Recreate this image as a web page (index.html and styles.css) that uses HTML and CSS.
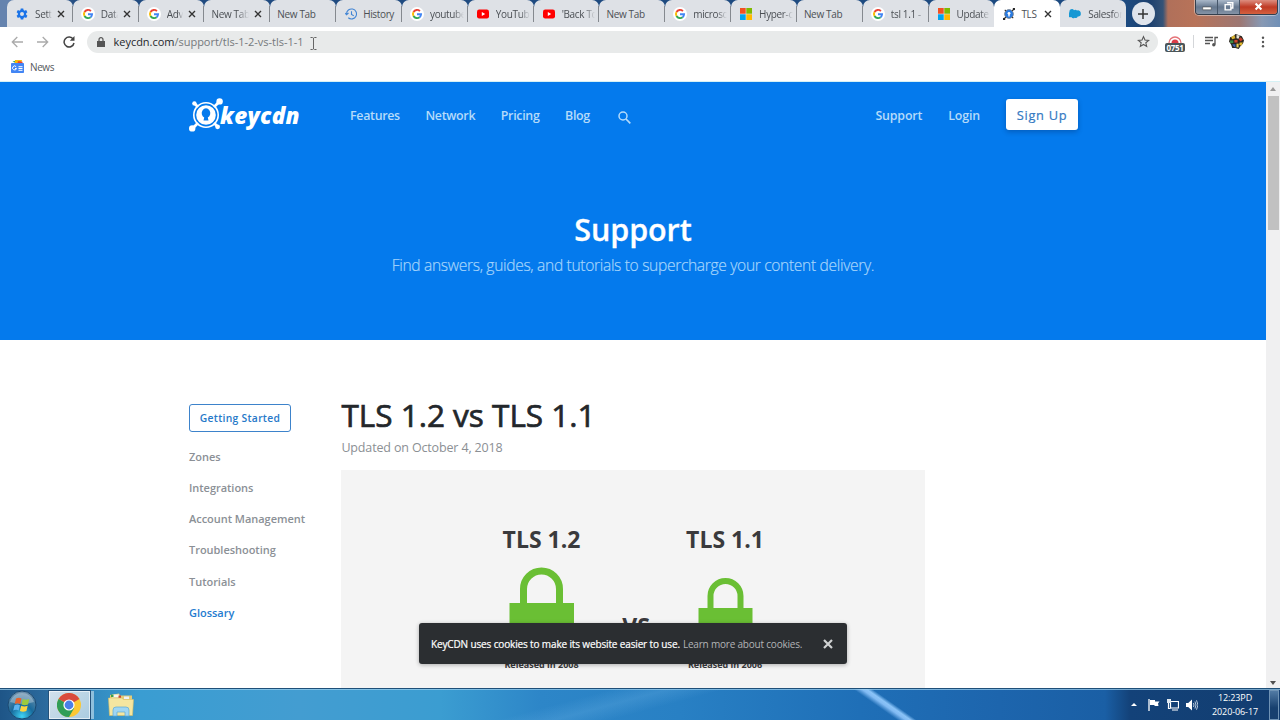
FILE: index.html
```html
<!DOCTYPE html>
<html lang="en">
<head>
  <meta charset="UTF-8">
  <title>TLS 1.2 vs TLS 1.1 - KeyCDN Support</title>
  <link rel="stylesheet" href="styles.css">
</head>
<body>

  <svg class="defs">
    <symbol id="google" viewBox="0 0 48 48">
      <circle cx="24" cy="24" r="24" fill="#fff"/>
      <g fill="none" stroke-width="6.5">
        <path d="M34 14A14 14 0 0 0 12 17" stroke="#ea4335"/>
        <path d="M12 17A14 14 0 0 0 12 31" stroke="#fbbc05"/>
        <path d="M12 31A14 14 0 0 0 33 35" stroke="#34a853"/>
        <path d="M33 35A14 14 0 0 0 38 25H24" stroke="#4285f4"/>
      </g>
    </symbol>
    <symbol id="windows" viewBox="0 0 12 12">
      <path d="M0 0h5.7v5.7H0z" fill="#f25022"/>
      <path d="M6.3 0H12v5.7H6.3z" fill="#7fba00"/>
      <path d="M0 6.3h5.7V12H0z" fill="#00a4ef"/>
      <path d="M6.3 6.3H12V12H6.3z" fill="#ffb900"/>
    </symbol>
    <symbol id="youtube" viewBox="0 0 12 12">
      <rect y="1.5" width="12" height="9" rx="2.2" fill="#f00"/>
      <path d="M4.8 4l3.4 2-3.4 2z" fill="#fff"/>
    </symbol>
    <symbol id="close" viewBox="0 0 8 8">
      <path d="M1 1l6 6M7 1L1 7" stroke="currentColor" stroke-width="1.4" fill="none"/>
    </symbol>
    <symbol id="keycdn" viewBox="0 0 34 34">
      <g fill="none" stroke="currentColor">
        <circle cx="17" cy="17" r="12.2" stroke-width="1.6"/>
        <path d="M3 31l6-6M25 9l6-6M5 5l4 4M25 25l4 4" stroke-width="2.8"/>
      </g>
      <g fill="currentColor">
        <circle cx="17" cy="17" r="9.8"/>
        <circle cx="3.2" cy="30.4" r="3.2"/>
        <circle cx="30.6" cy="3.4" r="3.2"/>
        <circle cx="5.4" cy="5.4" r="2.2"/>
        <circle cx="28.6" cy="28.8" r="2.4"/>
      </g>
      <path d="M15.200 19.500a4.300 4.800 0 1 1 3.600 0l.7 3h-5z" fill="#047aed"/>
    </symbol>
  </svg>

  <div class="tab-strip">
    <div class="tabs">
      <div class="tab">
        <svg class="favicon" viewBox="0 0 24 24"><path fill="#1a73e8" fill-rule="evenodd" d="M9.5 1h5l.6 3.2 2 1.2 3.2-1.2 2.5 4.3-2.5 2.2v2.6l2.5 2.2-2.5 4.3-3.2-1.2-2 1.2-.6 3.2h-5l-.6-3.2-2-1.2-3.2 1.2-2.5-4.3 2.5-2.2v-2.6L1.2 8.5l2.5-4.3 3.2 1.2 2-1.2zM12 8a4 4 0 1 0 0 8 4 4 0 0 0 0-8z"/></svg>
        <span>Settings</span><svg class="tab-close"><use href="#close"/></svg>
      </div>
      <div class="tab"><svg class="favicon big"><use href="#google"/></svg><span>Data</span><svg class="tab-close"><use href="#close"/></svg></div>
      <div class="tab"><svg class="favicon big"><use href="#google"/></svg><span>Advanced</span><svg class="tab-close"><use href="#close"/></svg></div>
      <div class="tab"><span>New Tab</span><svg class="tab-close"><use href="#close"/></svg></div>
      <div class="tab"><span>New Tab</span></div>
      <div class="tab">
        <svg class="favicon" viewBox="0 0 24 24"><path fill="none" stroke="#4285d4" stroke-width="2.2" d="M3 12a10 10 0 1 1 3.5 7.5M0 10l3 3.500L7 10M13 6.500V13l4.500 2.500"/></svg>
        <span class="fits">History</span>
      </div>
      <div class="tab"><svg class="favicon big"><use href="#google"/></svg><span>youtube</span></div>
      <div class="tab"><svg class="favicon"><use href="#youtube"/></svg><span>YouTube</span></div>
      <div class="tab"><svg class="favicon"><use href="#youtube"/></svg><span>'Back To</span></div>
      <div class="tab"><span>New Tab</span></div>
      <div class="tab"><svg class="favicon big"><use href="#google"/></svg><span>microsoft</span></div>
      <div class="tab"><svg class="favicon"><use href="#windows"/></svg><span>Hyper-c</span></div>
      <div class="tab"><span>New Tab</span></div>
      <div class="tab"><svg class="favicon big"><use href="#google"/></svg><span>tsl 1.1 -</span></div>
      <div class="tab before-active"><svg class="favicon"><use href="#windows"/></svg><span>Update</span></div>
      <div class="tab active">
        <svg class="favicon" viewBox="0 0 34 34">
          <path d="M3 31L31 3M5 5l24 24" stroke="#222" stroke-width="3"/>
          <circle cx="3" cy="31" r="3.5" fill="#222"/><circle cx="31" cy="3" r="3.5" fill="#222"/>
          <circle cx="17" cy="17" r="12.5" fill="#2a7be0" stroke="#777" stroke-width="2"/>
          <circle cx="17" cy="15" r="4" fill="#fff"/><path d="M15 15h4v9h-4z" fill="#fff"/>
        </svg>
        <span class="fits">TLS</span><svg class="tab-close"><use href="#close"/></svg>
      </div>
      <div class="tab"><svg class="favicon" viewBox="0 0 24 24"><path fill="#1798d4" d="M10 4.500a5 5 0 0 1 6 .5 5.500 5.500 0 0 1 7.500 6 5 5 0 0 1-6 6 4.500 4.500 0 0 1-6 2.500 5 5 0 0 1-7-1.500A5 5 0 0 1 1 8.500a5 5 0 0 1 9-4z"/></svg><span>Salesforce</span></div>
    </div>
    <div class="new-tab"><svg viewBox="0 0 12 12"><path d="M6 1v10M1 6h10" stroke="#333" stroke-width="1.5"/></svg></div>
    <div class="window-buttons">
      <div class="win-btn"><svg viewBox="0 0 22 13"><path d="M7 7h9v3H7z" fill="#fff" stroke="#444" stroke-width=".6"/></svg></div>
      <div class="win-btn"><svg viewBox="0 0 22 13"><path d="M9.500 2.500h6v5.500h-2M7.500 4.500h6v5.500h-6z" fill="none" stroke="#fff" stroke-width="1.5"/></svg></div>
      <div class="win-btn win-close"><svg viewBox="0 0 38 13"><path d="M16 3.500l6 6M22 3.500l-6 6" stroke="#fff" stroke-width="2.2"/></svg></div>
    </div>
  </div>

  <div class="toolbar">
    <div class="nav-buttons">
      <svg viewBox="0 0 12 12"><path d="M12 6H1.500M6.300 1L1.300 6l5 5" stroke="#aaa"/></svg>
      <svg viewBox="0 0 12 12"><path d="M0 6h10.500M5.700 1l5 5-5 5" stroke="#aaa"/></svg>
      <svg viewBox="0 0 12 12"><path d="M10.300 3.300A5 5 0 1 0 11 7" stroke="#444" stroke-width="1.5"/><path d="M11.500 0v4.800H6.800z" fill="#444" stroke="none"/></svg>
    </div>
    <div class="omnibox">
      <svg class="lock" viewBox="0 0 8 10"><path d="M0 4h8v6H0z" fill="#555"/><path d="M2 4V2.700a2 2 0 0 1 4 0V4" fill="none" stroke="#555" stroke-width="1.2"/></svg>
      <div class="url">keycdn.com<span>/support/tls-1-2-vs-tls-1-1</span></div>
      <svg class="caret" viewBox="0 0 7 13"><path d="M.5.5h2l1 .7 1-.7h2M3.500 1v11M.500 12.500h2l1-.7 1 .7h2" fill="none" stroke="#666"/></svg>
      <svg class="star" viewBox="0 0 24 24"><path d="M12 3l2.700 6.300 6.800.6-5.200 4.500 1.600 6.700-5.900-3.600-5.900 3.600 1.600-6.700-5.200-4.500 6.800-.6z" fill="none" stroke="#555" stroke-width="2"/></svg>
    </div>
    <div class="extensions">
      <div class="recorder">
        <svg viewBox="0 0 14 8"><path d="M1 8a6 6 0 0 1 12 0" fill="none" stroke="#e57378" stroke-width="1.3"/><path d="M3.500 8a3.500 3.500 0 0 1 7 0z" fill="#dc3c46"/></svg>
        <span>0751</span>
      </div>
      <i class="divider"></i>
      <svg class="playlist" viewBox="0 0 13 11"><path d="M0 1.500h8M0 4.500h8M0 7.500h5" stroke="#555" stroke-width="1.3"/><path d="M10 8.500V1.500h3" fill="none" stroke="#555" stroke-width="1.3"/><circle cx="8.8" cy="8.8" r="1.7" fill="#555"/></svg>
      <svg class="avatar" viewBox="0 0 14 14">
        <path d="M1 3l3-1 2-2 3 1 3 1 2 4-1 3-2 2-2 3-3-1-3 0-1-3-2-3z" fill="#2a2720"/>
        <path d="M2 3l3-2 1 3-3 1z" fill="#d9b22b"/><path d="M7 1l3 .5-1 3-2-.5z" fill="#e8e3d5"/><path d="M10.500 3l2.500 2-2 2-2-2z" fill="#c83d2a"/>
        <path d="M1 6l3 0 0 2.500-3 0z" fill="#3c8b45"/><path d="M5 5.500l3 0 0 2.500-3 0z" fill="#d4442b"/><path d="M10 8l3 0-1.500 3-2-1z" fill="#e2b92e"/>
        <path d="M3 9.500l3 0 0 3-2-1z" fill="#3a64b5"/><path d="M7 9l2 0 0 3.500-2 0z" fill="#e5d054"/>
      </svg>
      <svg class="menu" viewBox="0 0 4 12"><circle cx="2" cy="1.8" r="1.2"/><circle cx="2" cy="6" r="1.2"/><circle cx="2" cy="10.2" r="1.2"/></svg>
    </div>
  </div>

  <div class="bookmarks">
    <svg viewBox="0 0 13 13"><path d="M1.500 1.500l5-1.200.5 4z" fill="#34a853"/><path d="M4 0h7l-1 4H4z" fill="#fbbc05"/><path d="M7 1l4.500.7V5H6z" fill="#ea4335"/><rect y="3" width="13" height="10" rx=".8" fill="#4285f4"/><path d="M5.200 6.800A2 2 0 1 0 5.500 8.500H4M7.500 6.700h4M7.500 8.500h4M7.500 10.300h4" fill="none" stroke="#fff"/></svg>
    <span>News</span>
  </div>

  <div class="viewport">
    <div class="page">
      <header class="hero">
        <nav>
          <a class="logo"><svg><use href="#keycdn"/></svg><b>keycdn</b></a>
          <div class="nav-links">
            <a>Features</a>
            <a>Network</a>
            <a>Pricing</a>
            <a>Blog</a>
            <svg viewBox="0 0 13 13"><circle cx="5" cy="5" r="4" fill="none" stroke="currentColor" stroke-width="1.5"/><path d="M8 8l4.300 4.300" stroke="currentColor" stroke-width="1.7"/></svg>
          </div>
          <div class="nav-account">
            <a>Support</a>
            <a>Login</a>
            <a class="sign-up">Sign Up</a>
          </div>
        </nav>
        <h2>Support</h2>
        <p>Find answers, guides, and tutorials to supercharge your content delivery.</p>
      </header>

      <main>
        <aside>
          <a class="started">Getting Started</a>
          <a>Zones</a>
          <a>Integrations</a>
          <a>Account Management</a>
          <a>Troubleshooting</a>
          <a>Tutorials</a>
          <a class="current">Glossary</a>
        </aside>
        <article>
          <h1>TLS 1.2 vs TLS 1.1</h1>
          <p class="updated">Updated on October 4, 2018</p>
          <svg class="figure" viewBox="0 0 584 218">
            <g class="figure-title">
              <text x="200.5" y="78">TLS 1.2</text>
              <text x="384" y="78">TLS 1.1</text>
              <text x="295" y="165">VS</text>
            </g>
            <g fill="#6abf34">
              <path d="M168.500 133h64.500v48h-64.500z"/>
              <path d="M357.500 138h54v40h-54z"/>
            </g>
            <g fill="none" stroke="#6abf34">
              <path d="M182.500 134v-15a18 18 0 0 1 36 0V134" stroke-width="7"/>
              <path d="M369.500 139v-13a15 15 0 0 1 30 0v13" stroke-width="6"/>
            </g>
            <g class="figure-note">
              <text x="200.5" y="198">Released in 2008</text>
              <text x="384" y="198">Released in 2006</text>
            </g>
          </svg>
        </article>
      </main>

      <div class="cookies">
        <span>KeyCDN uses cookies to make its website easier to use.</span>
        <a>Learn more about cookies.</a>
        <svg viewBox="0 0 10 10"><path d="M1 1l8 8M9 1L1 9" stroke="#d0d2d3" stroke-width="2.2"/></svg>
      </div>
    </div>
    <div class="scrollbar">
      <i class="up"></i>
      <div class="thumb"></div>
      <i class="down"></i>
    </div>
  </div>

  <div class="taskbar">
    <svg class="start" viewBox="0 0 30 30">
      <defs>
        <radialGradient id="orb" cx=".5" cy=".9" r=".9"><stop offset="0" stop-color="#3fd3f5"/><stop offset=".45" stop-color="#176a9c"/><stop offset="1" stop-color="#7593ad"/></radialGradient>
      </defs>
      <circle cx="15" cy="15" r="14" fill="url(#orb)" stroke="#1b4a72"/>
      <path d="M3 12a12.500 12.500 0 0 1 24 0q-12 4-24 0z" fill="#fff" opacity=".3"/>
      <path d="M9 8.500q3-1.500 5.500 0l-1.300 5.500q-2.500-1.500-5.500 0z" fill="#e8622c"/>
      <path d="M15.800 9q3 1.500 6.500 0L21 14.500q-3.500 1.500-6.500 0z" fill="#9ccb3d"/>
      <path d="M7.500 15.300q3-1.500 5.500 0l-1.300 5.200q-2.500-1.500-5.500 0z" fill="#5fb4ef"/>
      <path d="M14.200 15.800q3 1.500 6.500 0l-1.300 5.200q-3.500 1.500-6.500 0z" fill="#fdd33e"/>
    </svg>
    <div class="task-chrome">
      <svg viewBox="0 0 24 24">
        <circle cx="12" cy="12" r="12" fill="#fbc834"/>
        <path d="M12 12L1.600 6A12 12 0 0 1 22.400 6z" fill="#d94b3d"/>
        <path d="M1.600 6A12 12 0 0 0 12 24l5.200-9L12 12z" fill="#2f9e57"/>
        <circle cx="12" cy="12" r="5.6" fill="#fff"/>
        <circle cx="12" cy="12" r="4.4" fill="#4a80e8"/>
      </svg>
    </div>
    <svg class="explorer" viewBox="0 0 26 24">
      <path d="M2 2l9-1.500 1 2h12V22H2z" fill="#e3cc78"/>
      <path d="M4 1.500h7v3H4z" fill="#f7f7f0"/><path d="M3 1.500h2.500V4H3z" fill="#3fa04a"/><path d="M10.500 2.500H13V5h-2.500z" fill="#cc4836"/><path d="M16 3.500h5V6h-5z" fill="#eef3f5"/>
      <path d="M.5 5h13l2 1.500H25.500L24.500 22.500h-23z" fill="#f5e6a0" stroke="#d9bf65" stroke-width=".6"/>
      <path d="M5 23v-6q0-3 3-3h10q3 0 3 3v6h-4v-4H9v4z" fill="#9fd6f3" stroke="#5ca9d6" stroke-width=".7"/>
    </svg>
    <div class="tray">
      <svg class="tray-up" viewBox="0 0 6 3"><path d="M0 3l3-3 3 3z" fill="#fff"/></svg>
      <svg class="tray-flag" viewBox="0 0 12 12"><path d="M1 0v12" stroke="#fff" stroke-width="1.3"/><path d="M2 1h5v1.500h4.500L10 4.500 10.500 7H6.500V6H2z" fill="#fff"/></svg>
      <svg class="tray-net" viewBox="0 0 12 12"><path d="M3.500 2.500h8v6.500h-8zM5 11h6M1.500 4v5.500h2" fill="none" stroke="#fff" stroke-width="1.2"/><path d="M0 0h4v4H0z" fill="#dfe8f0"/></svg>
      <svg class="tray-sound" viewBox="0 0 12 12"><path d="M0 4h2.200L6 .5v11L2.200 8H0z" fill="#fff"/><path d="M7.500 4q1 2 0 4M9 2.500q2 3.500 0 7M10.500 1.300q3 4.700 0 9.400" fill="none" stroke="#e4eef7" stroke-width=".8"/></svg>
      <div class="clock"><div>12:23PD</div><div>2020-06-17</div></div>
      <div class="show-desktop"></div>
    </div>
  </div>

</body>
</html>
```

FILE: styles.css
```css
* {
  box-sizing: border-box;
}

body {
  margin: 0;
  width: 1280px;
  height: 720px;
  overflow: hidden;
  font-family: "Open Sans", "Noto Sans", sans-serif;
  background-color: white;
}

svg {
  display: block;
  flex: none;
}

.defs {
  display: none;
}

/* browser tabs */
.tab-strip {
  display: flex;
  height: 27px;
  padding-left: 7px;
  background: linear-gradient(90deg, #6583ae 0, #6583ae 7px, #214b80 80px, #1c4a80 1126px, #1d416f 1150px, #355377 1163px, #b0705a 1168px, #b87359 1195px, #9c7773 1240px, #8799b4 1262px, #6f8fb6 1280px);
}

.tabs {
  display: flex;
  width: 1119px;
}

.tab {
  position: relative;
  display: flex;
  align-items: center;
  flex: 1 1 0;
  min-width: 0;
  padding: 0 4px 0 9px;
  gap: 7px;
  background-color: #dee1e6;
  border-radius: 7px 7px 0 0;
  color: #4c5055;
  font-size: 10px;
}

.tab::after {
  content: "";
  position: absolute;
  right: 0;
  top: 6px;
  width: 1px;
  height: 16px;
  background-color: #85898f;
}

.tab.active::after,
.tab.before-active::after,
.tab:last-child::after {
  display: none;
}

.tab.active {
  background-color: white;
}

.tab span {
  flex: 1;
  min-width: 0;
  overflow: hidden;
  white-space: nowrap;
  letter-spacing: -0.35px;
  -webkit-mask-image: linear-gradient(90deg, #000 70%, transparent);
  mask-image: linear-gradient(90deg, #000 70%, transparent);
}

.tab > span:first-child:last-child,
.tab .fits {
  -webkit-mask-image: none;
  mask-image: none;
}

.tab > span:first-child {
  margin-left: -2px;
}

.tab .fits {
  margin-left: -1px;
}

.favicon {
  width: 12px;
  height: 12px;
}

.favicon.big {
  width: 14px;
  height: 14px;
  margin: 0 -1px;
}

.tab-close {
  width: 8px;
  height: 8px;
  margin: 0 4px 0 -2px;
  color: #333;
}

.new-tab {
  display: flex;
  align-items: center;
  justify-content: center;
  width: 23px;
  height: 23px;
  margin: 2px 0 0 5.5px;
  border-radius: 50%;
  background-color: #dfe4ec;
}

.new-tab svg {
  width: 12px;
  height: 12px;
}

.window-buttons {
  display: flex;
  height: 15px;
  margin-left: 40.5px;
  border: 1px solid #333f4e;
  border-top: 0;
  border-radius: 0 0 4px 4px;
  box-shadow: 0 0 0 1px rgba(255, 255, 255, 0.4);
  overflow: hidden;
}

.win-btn {
  width: 22px;
  background: linear-gradient(#aab8c9, #66788f 50%, #8493a6);
  border-right: 1px solid #46566a;
}

.win-btn svg {
  width: 100%;
  height: 13px;
}

.win-btn.win-close {
  width: 37px;
  background: linear-gradient(#dd8e80, #bf3a25 50%, #d4613f);
  border-right: 0;
}

/* address bar */
.toolbar {
  display: flex;
  align-items: center;
  height: 29px;
}

.nav-buttons {
  display: flex;
  gap: 14px;
  width: 87px;
  padding-left: 11px;
}

.nav-buttons svg {
  width: 12px;
  height: 12px;
  fill: none;
  stroke-width: 1.3;
}

.omnibox {
  display: flex;
  align-items: center;
  width: 1071px;
  height: 22px;
  padding: 0 8px 0 10px;
  border-radius: 11px;
  background-color: #e8eaea;
}

.lock {
  width: 8px;
  height: 10px;
}

.url {
  width: 190px;
  margin-left: 8.5px;
  font-size: 11px;
  letter-spacing: -0.02px;
  color: #25272a;
  white-space: nowrap;
}

.url span {
  color: #75797c;
}

.caret {
  width: 7px;
  height: 13px;
  margin: 3px 0 0 6.5px;
}

.star {
  width: 13px;
  height: 13px;
  margin-left: auto;
}

.extensions {
  display: flex;
  align-items: center;
  flex: 1;
  padding-left: 7px;
}

.recorder {
  display: flex;
  flex-direction: column;
  align-items: center;
  width: 20px;
  margin-top: 4px;
}

.recorder svg {
  width: 14px;
  height: 8px;
}

.recorder span {
  width: 20px;
  height: 9px;
  border-radius: 2px;
  background-color: #4b5558;
  color: white;
  font-size: 8px;
  font-weight: bold;
  line-height: 9px;
  text-align: center;
  letter-spacing: -0.3px;
}

.divider {
  width: 1px;
  height: 13px;
  margin: 0 11px 0 8px;
  background-color: #d4d6d9;
}

.playlist {
  width: 13px;
  height: 11px;
}

.avatar {
  width: 15px;
  height: 15px;
  margin-left: 11px;
}

.menu {
  width: 4px;
  height: 12px;
  margin-left: 17px;
  fill: #555;
}

.bookmarks {
  display: flex;
  align-items: center;
  gap: 6px;
  height: 26px;
  padding: 0 0 4px 11px;
  border-bottom: 1px solid #d5f1f5;
  font-size: 10px;
  color: #55585c;
}

.bookmarks svg {
  width: 13px;
  height: 13px;
}

.bookmarks span {
  letter-spacing: -0.4px;
}

/* page */
.viewport {
  display: flex;
  height: 606px;
}

.page {
  position: relative;
  width: 1266px;
  overflow: hidden;
}

.hero {
  height: 258px;
  background-color: #047aed;
  text-align: center;
}

nav {
  display: flex;
  align-items: center;
  width: 889px;
  height: 67px;
  margin-left: 189px;
  font-size: 12.4px;
  font-weight: 600;
  color: #b5dbfa;
}

.logo {
  display: flex;
  align-items: center;
  width: 161px;
  color: white;
}

.logo svg {
  width: 34px;
  height: 34px;
  margin-top: -1px;
}

.logo b {
  margin: 1px 0 0 -3px;
  font-size: 22.5px;
  font-weight: 800;
  font-style: italic;
  line-height: 28px;
  letter-spacing: 0.3px;
}

.nav-links {
  display: flex;
  align-items: center;
  gap: 25.6px;
  letter-spacing: -0.3px;
}

.nav-links svg {
  width: 13px;
  height: 13px;
  margin: 3px 0 0 2px;
}

.nav-account {
  display: flex;
  align-items: center;
  gap: 26px;
  margin-left: auto;
  letter-spacing: -0.15px;
}

.sign-up {
  width: 72px;
  height: 31px;
  margin-bottom: 2px;
  border-radius: 3px;
  background-color: white;
  box-shadow: 0 2px 5px rgba(0, 30, 80, 0.3);
  color: #3379c2;
  font-size: 12.8px;
  font-weight: 500;
  line-height: 32px;
  letter-spacing: 0.7px;
  -webkit-text-stroke: 0.2px #3379c2;
}

.hero h2 {
  margin: 58px 0 0;
  font-size: 30.5px;
  font-weight: 600;
  line-height: 44px;
  letter-spacing: -0.1px;
  color: white;
  -webkit-text-stroke: 0.3px white;
}

.hero p {
  margin: 2px 0 0;
  font-size: 15.6px;
  font-weight: 300;
  line-height: 24px;
  letter-spacing: -0.33px;
  color: #a6d5fc;
  -webkit-text-stroke: 0.2px #a6d5fc;
}

main {
  display: flex;
  width: 889px;
  margin-left: 189px;
  padding-top: 64px;
}

aside {
  display: flex;
  flex-direction: column;
  align-items: flex-start;
  width: 152.4px;
  font-size: 11px;
  font-weight: 600;
  letter-spacing: -0.03px;
  color: #8b9096;
}

aside a {
  height: 31.2px;
  line-height: 31px;
  white-space: nowrap;
}

aside .started {
  width: 102px;
  height: 28px;
  margin-bottom: 8.8px;
  border: 1px solid #3d83cb;
  border-radius: 3px;
  color: #2678c8;
  font-size: 10.3px;
  line-height: 26px;
  text-align: center;
  letter-spacing: 0.3px;
}

aside .current {
  color: #1f7cd0;
}

h1 {
  margin: -12px 0 0;
  font-size: 31.5px;
  font-weight: 400;
  line-height: 45px;
  color: #23272b;
  white-space: nowrap;
  -webkit-text-stroke: 0.7px #23272b;
}

.updated {
  margin: 1px 0 12px;
  font-size: 12.5px;
  line-height: 20px;
  letter-spacing: -0.15px;
  color: #8b8f94;
}

.figure {
  width: 584px;
  height: 218px;
  background-color: #f4f4f4;
}

.figure text {
  fill: #3a3a3c;
  font-weight: 700;
  text-anchor: middle;
}

.figure-title {
  font-size: 23px;
}

.figure-note {
  font-size: 9px;
}

.cookies {
  position: absolute;
  left: 419px;
  top: 541px;
  display: flex;
  align-items: center;
  width: 428px;
  height: 41px;
  padding: 0 14px 0 12px;
  border-radius: 3px;
  background-color: #2b2e31;
  box-shadow: 0 1px 4px rgba(0, 0, 0, 0.3);
  color: white;
  font-size: 10px;
  letter-spacing: -0.14px;
  white-space: nowrap;
}

.cookies span {
  -webkit-text-stroke: 0.2px white;
}

.cookies a {
  margin-left: 3px;
  letter-spacing: -0.2px;
  color: #b2b4b6;
}

.cookies svg {
  width: 10px;
  height: 10px;
  margin-left: auto;
}

.scrollbar {
  display: flex;
  flex-direction: column;
  align-items: center;
  width: 14px;
  padding: 5px 0 3px;
  background-color: #f0f0f1;
}

.thumb {
  width: 11px;
  height: 134px;
  margin: 5px 0 auto 1px;
  background-color: #c1c1c1;
}

.up,
.down {
  border: 3px solid transparent;
}

.up {
  border-top: 0;
  border-bottom: 4px solid #999;
}

.down {
  border-bottom: 0;
  border-top: 4px solid #505050;
}

/* taskbar */
.taskbar {
  display: flex;
  align-items: center;
  height: 32px;
  border-top: 1px solid #1f4f78;
  box-shadow: inset 0 1px 0 rgba(160, 210, 240, 0.7);
  background:
    linear-gradient(35deg, transparent 40%, rgba(140, 195, 250, 0.9) 47%, rgba(150, 205, 255, 0.9) 51%, transparent 56%) 850px 0 / 76px 32px no-repeat,
    linear-gradient(165deg, transparent 35%, rgba(130, 195, 240, 0.2) 50%, transparent 65%) 480px 0 / 260px 32px no-repeat,
    linear-gradient(90deg, #1e5587 0, #2b6a9d 45px, #338bc0 95px, #3a9dd2 140px, #439dd1 300px, #3b9dd1 440px, #2d86c8 540px, #2880c4 680px, #1f6fb7 860px, #1d65ad 1000px, #1a5fa5 1105px, #134279 1130px, #123d70 1280px);
}

.start {
  width: 30px;
  height: 30px;
  margin-left: 7px;
}

.task-chrome {
  display: flex;
  align-items: center;
  justify-content: center;
  width: 43px;
  height: 30px;
  margin-left: 11px;
  padding-right: 1px;
  border: 1px solid #24527a;
  box-shadow: inset 0 0 0 1px rgba(255, 255, 255, 0.6), 4px 0 0 -1px #8fc0dc;
  background: linear-gradient(135deg, #d3e2ec, #a9cbe0);
}

.task-chrome svg {
  width: 24px;
  height: 24px;
}

.explorer {
  width: 26px;
  height: 24px;
  margin-left: 17px;
}

.tray {
  display: flex;
  align-items: center;
  height: 100%;
  margin-left: auto;
}

.tray-up {
  width: 6px;
  height: 3px;
}

.tray-flag {
  width: 12px;
  height: 12px;
  margin-left: 11px;
}

.tray-net {
  width: 12px;
  height: 12px;
  margin-left: 7px;
}

.tray-sound {
  width: 12px;
  height: 12px;
  margin-left: 7px;
}

.clock {
  width: 54px;
  margin-left: 10px;
  color: white;
  font-size: 9px;
  line-height: 13.5px;
  letter-spacing: -0.1px;
  text-align: center;
  white-space: nowrap;
}

.show-desktop {
  width: 10px;
  height: 30px;
  margin: 1px 1px 0 7px;
  border: 1px solid #6f93b5;
  background: linear-gradient(#527ba4, #17406f 60%);
}
```
